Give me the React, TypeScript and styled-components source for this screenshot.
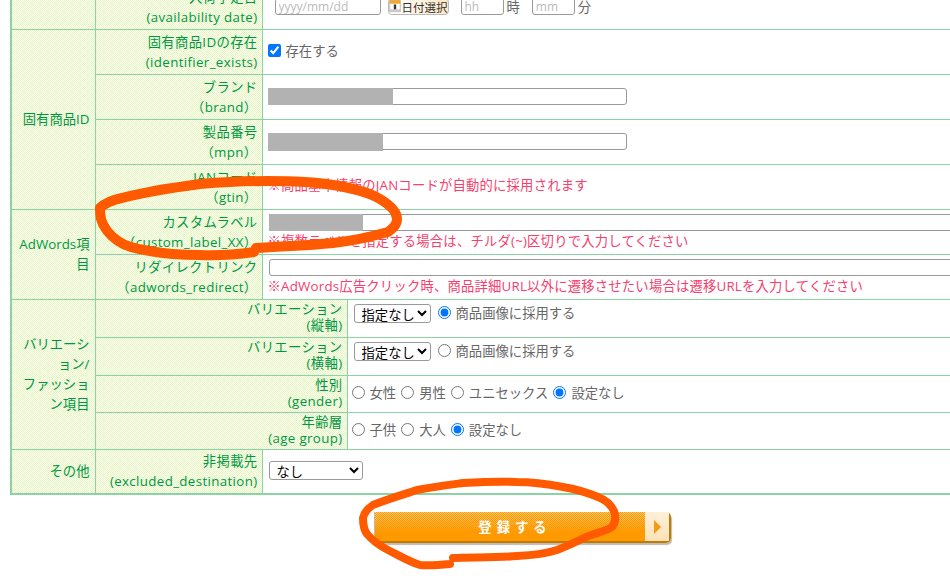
import { FC, ReactNode } from 'react'
import styled, { createGlobalStyle } from 'styled-components'

const GlobalStyle = createGlobalStyle`
  html, body {
    margin: 0;
    padding: 0;
    background: #fff;
    overflow: hidden;
  }
  body {
    font-family: "Open Sans", "Noto Sans CJK JP", sans-serif;
    font-size: 13.33px;
    color: #666;
  }
`

const LINE = '#8cd3a3'
const CHECKER = `url("data:image/svg+xml,%3Csvg xmlns='http://www.w3.org/2000/svg' width='2' height='2' shape-rendering='crispEdges'%3E%3Crect width='2' height='2' fill='%23fff'/%3E%3Crect width='1' height='1' fill='%23e2f6b6'/%3E%3Crect x='1' y='1' width='1' height='1' fill='%23e2f6b6'/%3E%3C/svg%3E") 0 0 / 2px 2px fixed`

const Screen = styled('div')`
  position: relative;
  width: 950px;
  height: 578px;
  overflow: hidden;
`

// ページがスクロールされた状態
const Scrolled = styled('div')`
  margin-top: -17px;
  padding-left: 10px;
`

const FormTable = styled('table')`
  width: 1100px;
  table-layout: fixed;
  border-collapse: collapse;
  border: 2px solid ${LINE};
`

const Row = styled('tr')<{ $h: number }>`
  height: ${(p) => p.$h}px;
`

const Group = styled('th')`
  background: ${CHECKER};
  border: 1px solid ${LINE};
  color: #00963f;
  font-weight: normal;
  text-align: right;
  line-height: 20px;
  padding: 0 5px 0 0;
  white-space: nowrap;
`

const Label = styled('th')<{ $compact?: boolean }>`
  background: ${CHECKER};
  border: 1px solid ${LINE};
  color: #00963f;
  font-weight: normal;
  text-align: right;
  letter-spacing: 0.35px;
  line-height: ${(p) => (p.$compact ? 16 : 20)}px;
  padding: 0 4px ${(p) => (p.$compact ? 2 : 0)}px 0;
  white-space: nowrap;
`

const Value = styled('td')<{ $top?: number; $bottom?: number; $left?: number; $align?: string }>`
  border: 1px solid ${LINE};
  padding: ${(p) => p.$top ?? 0}px 0 ${(p) => p.$bottom ?? 0}px ${(p) => p.$left ?? 5}px;
  vertical-align: ${(p) => p.$align ?? 'middle'};
  white-space: nowrap;
  overflow: hidden;
`

const InlineRow = styled('div')<{ $gap?: number }>`
  display: flex;
  align-items: center;
  gap: ${(p) => p.$gap ?? 0}px;
`

const TextInput = styled('input')<{ $w: number; $left?: number }>`
  box-sizing: border-box;
  display: block;
  width: ${(p) => p.$w}px;
  height: 17px;
  padding: 0 3px;
  margin: 0 0 0 ${(p) => p.$left ?? 0}px;
  border: 1px solid #999;
  border-radius: 3px;
  background: #fff;
  font: inherit;
  font-size: 12px;
  &::placeholder {
    color: #bbb;
  }
`

const InputWrap = styled('div')`
  position: relative;
  width: fit-content;
`

const Redact = styled('span')<{ $x?: number; $w: number; $h: number }>`
  position: absolute;
  left: ${(p) => p.$x ?? 0}px;
  top: 0;
  width: ${(p) => p.$w}px;
  height: ${(p) => p.$h}px;
  background: #b2b2b2;
`

const Note = styled('div')`
  color: #f5406e;
  line-height: 20px;
  letter-spacing: 0.2px;
`

const Picker = styled('button')`
  display: flex;
  align-items: center;
  gap: 1px;
  box-sizing: border-box;
  width: 61px;
  height: 17px;
  padding: 0;
  margin-left: 7px;
  border: 1px solid #bbb;
  border-radius: 4px;
  background: linear-gradient(90deg, #fff, #ffe8c4);
  color: #333;
  font: inherit;
  font-size: 11.5px;
`

const Unit = styled('span')`
  color: #666;
  margin-left: 3px;
`

const Check = styled('input')`
  width: 13px;
  height: 13px;
  margin: 0 0 2px;
`

const Option = styled('label')`
  display: inline-flex;
  align-items: center;
  color: #666;
  line-height: 18px;
`

const OptionText = styled('span')`
  margin: 0 0 2px 5px;
`

const Radio = styled('input')`
  width: 13px;
  height: 13px;
  margin: 0 0 2px;
`

const Dropdown = styled('select')<{ $w: number }>`
  box-sizing: border-box;
  width: ${(p) => p.$w}px;
  height: 19px;
  padding: 0 0 0 3px;
  margin: 0;
  border: 1px solid #999;
  border-radius: 3px;
  background-color: #fff;
  color: #000;
  font: inherit;
`

const Footer = styled('div')`
  padding: 17px 0 0 364px;
`

const SubmitButton = styled('button')`
  display: flex;
  align-items: stretch;
  box-sizing: border-box;
  width: 297px;
  height: 31px;
  padding: 0;
  border: 0;
  border-left: 1px solid #bbb;
  border-bottom: 2px solid #c47a00;
  border-right: 2px solid #c47a00;
  border-radius: 0 5px 5px 0;
  background:
    linear-gradient(rgba(255, 153, 0, 0), #ff9900 70%),
    repeating-conic-gradient(#ffcc77 0 25%, #ff9900 0 50%) 0 0 / 2px 2px fixed;
  box-shadow: 1px 2px 1px #bbb;
  color: #fff;
  font: inherit;
  font-weight: bold;
  letter-spacing: 5px;
`

const SubmitText = styled('span')`
  flex: 1;
  align-self: center;
  text-align: center;
  padding-left: 10px;
`

const SubmitArrow = styled('span')`
  display: flex;
  align-items: center;
  justify-content: center;
  width: 24px;
  background: linear-gradient(#fff0d8, #fde2b8);
`

const ArrowHead = styled('span')`
  width: 0;
  height: 0;
  border-left: 7px solid #f59a12;
  border-top: 7px solid transparent;
  border-bottom: 7px solid transparent;
`

const Scribble = styled('svg')`
  position: absolute;
  left: 0;
  top: 0;
  pointer-events: none;
`

const CalendarIcon = () => (
  <svg width="15" height="15" viewBox="0 0 15 15">
    <rect x="1" y="0" width="13" height="14" fill="#fff" stroke="#aaa" />
    <rect x="1" y="0" width="13" height="4" fill="#f5a623" />
    <rect x="1" y="11" width="13" height="3" fill="#ccc" />
    <rect x="6" y="5" width="3" height="6" fill="#333" />
  </svg>
)

type FieldLabelProps = { ja: ReactNode; en: string; compact?: boolean; span?: number }

const FieldLabel: FC<FieldLabelProps> = ({ ja, en, compact, span }) => (
  <Label $compact={compact} colSpan={span}>
    {ja}
    <br />
    {en}
  </Label>
)

const RadioOption: FC<{ name: string; text: string; checked?: boolean }> = ({ name, text, checked }) => (
  <Option>
    <Radio type="radio" name={name} defaultChecked={checked} />
    <OptionText>{text}</OptionText>
  </Option>
)

export default function App() {
  return (
    <Screen>
      <GlobalStyle />
      <Scrolled>
        <FormTable>
          <colgroup>
            <col style={{ width: 84 }} />
            <col style={{ width: 167 }} />
            <col style={{ width: 85 }} />
            <col />
          </colgroup>
          <tbody>
            <Row $h={45}>
              <Group />
              <FieldLabel ja="入荷予定日" en="(availability date)" />
              <Value colSpan={2}>
                <InlineRow>
                  <TextInput $w={106} $left={7} placeholder="yyyy/mm/dd" />
                  <Picker>
                    <CalendarIcon />
                    日付選択
                  </Picker>
                  <TextInput $w={43} $left={12} placeholder="hh" />
                  <Unit>時</Unit>
                  <TextInput $w={43} $left={12} placeholder="mm" />
                  <Unit>分</Unit>
                </InlineRow>
              </Value>
            </Row>
            <Row $h={45}>
              <Group rowSpan={4}>固有商品ID</Group>
              <FieldLabel ja="固有商品IDの存在" en="(identifier_exists)" />
              <Value colSpan={2}>
                <Option>
                  <Check type="checkbox" defaultChecked />
                  <OptionText>存在する</OptionText>
                </Option>
              </Value>
            </Row>
            <Row $h={45}>
              <FieldLabel ja="ブランド" en="（brand）" />
              <Value colSpan={2}>
                <InputWrap>
                  <TextInput $w={359} />
                  <Redact $w={125} $h={17} />
                </InputWrap>
              </Value>
            </Row>
            <Row $h={45}>
              <FieldLabel ja="製品番号" en="（mpn）" />
              <Value colSpan={2}>
                <InputWrap>
                  <TextInput $w={359} />
                  <Redact $w={115} $h={18} />
                </InputWrap>
              </Value>
            </Row>
            <Row $h={45}>
              <FieldLabel ja="JANコード" en="（gtin）" />
              <Value colSpan={2} $bottom={4}>
                <Note>※商品基本情報のJANコードが自動的に採用されます</Note>
              </Value>
            </Row>
            <Row $h={45}>
              <Group rowSpan={2}>
                AdWords項
                <br />目
              </Group>
              <FieldLabel ja="カスタムラベル" en="（custom_label_XX）" />
              <Value colSpan={2} $top={2}>
                <InputWrap>
                  <TextInput $w={800} $left={1} />
                  <Redact $x={1} $w={94} $h={17} />
                </InputWrap>
                <Note>※複数ラベルを指定する場合は、チルダ(~)区切りで入力してください</Note>
              </Value>
            </Row>
            <Row $h={45}>
              <FieldLabel ja="リダイレクトリンク" en="（adwords_redirect）" />
              <Value colSpan={2} $top={2}>
                <TextInput $w={800} $left={1} />
                <Note>※AdWords広告クリック時、商品詳細URL以外に遷移させたい場合は遷移URLを入力してください</Note>
              </Value>
            </Row>
            <Row $h={38}>
              <Group rowSpan={4}>
                バリエーシ
                <br />
                ョン/
                <br />
                ファッショ
                <br />
                ン項目
              </Group>
              <FieldLabel compact span={2} ja="バリエーション" en="(縦軸)" />
              <Value $align="top" $top={4} $left={6}>
                <InlineRow $gap={7}>
                  <Dropdown $w={77} defaultValue="none">
                    <option value="none">指定なし</option>
                  </Dropdown>
                  <RadioOption name="v1" text="商品画像に採用する" checked />
                </InlineRow>
              </Value>
            </Row>
            <Row $h={38}>
              <FieldLabel compact span={2} ja="バリエーション" en="(横軸)" />
              <Value $align="top" $top={4} $left={6}>
                <InlineRow $gap={7}>
                  <Dropdown $w={77} defaultValue="none">
                    <option value="none">指定なし</option>
                  </Dropdown>
                  <RadioOption name="v2" text="商品画像に採用する" />
                </InlineRow>
              </Value>
            </Row>
            <Row $h={37}>
              <FieldLabel compact span={2} ja="性別" en="(gender)" />
              <Value $left={4}>
                <InlineRow $gap={5}>
                  <RadioOption name="gender" text="女性" />
                  <RadioOption name="gender" text="男性" />
                  <RadioOption name="gender" text="ユニセックス" />
                  <RadioOption name="gender" text="設定なし" checked />
                </InlineRow>
              </Value>
            </Row>
            <Row $h={37}>
              <FieldLabel compact span={2} ja="年齢層" en="(age group)" />
              <Value $left={4}>
                <InlineRow $gap={5}>
                  <RadioOption name="age" text="子供" />
                  <RadioOption name="age" text="大人" />
                  <RadioOption name="age" text="設定なし" checked />
                </InlineRow>
              </Value>
            </Row>
            <Row $h={45}>
              <Group>その他</Group>
              <FieldLabel ja="非掲載先" en="(excluded_destination)" />
              <Value colSpan={2} $left={6}>
                <Dropdown $w={94} defaultValue="none">
                  <option value="none">なし</option>
                </Dropdown>
              </Value>
            </Row>
          </tbody>
        </FormTable>
        <Footer>
          <SubmitButton type="button">
            <SubmitText>登録する</SubmitText>
            <SubmitArrow>
              <ArrowHead />
            </SubmitArrow>
          </SubmitButton>
        </Footer>
      </Scrolled>
      <Scribble width="950" height="578" viewBox="0 0 950 578" fill="none" stroke="#ff5a00" strokeLinecap="round" strokeLinejoin="round">
        <g strokeWidth="10">
          <path d="M100 208C105 203 112 200 122 198C145 192 170 188 200 184C225 182 250 181 267 181C295 181 315 182 333 185C352 188 368 192 380 199C390 205 397 211 397 219C397 225 393 228 388 232C370 237 352 241 333 243C305 246 280 246 256 248" />
          <path d="M254 252C240 254 220 256 200 255C180 255 165 254 150 251C135 249 125 246 118 241C108 234 103 226 101 219C100 214 100 212 100 208" />
        </g>
        <path strokeWidth="8" d="M453 558C470 557 495 558 517 556C535 555 548 553 557 550C570 545 578 541 586 537C596 533 606 531 612 527C616 522 616 517 614 511C611 505 606 500 598 497C586 492 575 489 563 487C547 484 532 482 517 482C497 481 480 482 463 483C448 485 432 487 417 490C402 495 388 499 373 505C367 509 364 513 363 518C363 524 364 530 367 534C373 541 380 546 388 550C400 556 410 562 420 565C430 566 440 565 450 564" />
      </Scribble>
    </Screen>
  )
}
